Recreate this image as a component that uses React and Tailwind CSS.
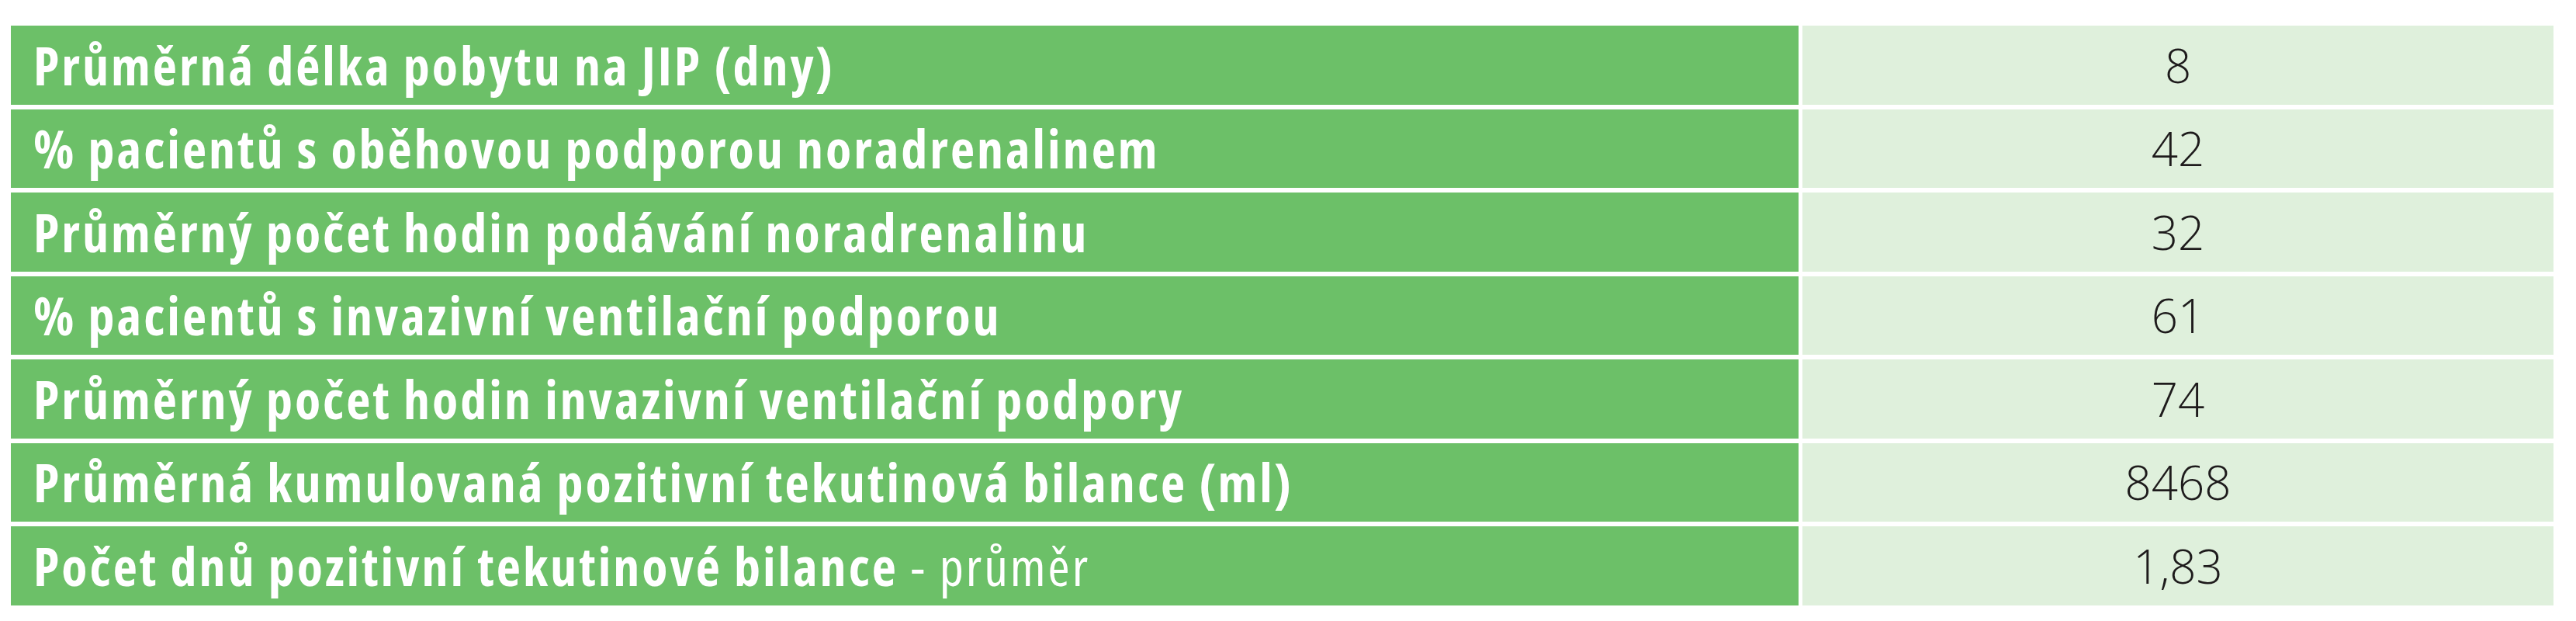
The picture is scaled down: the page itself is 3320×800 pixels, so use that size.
const rows = [
  { label: 'Průměrná délka pobytu na JIP (dny)', value: '8' },
  { label: '% pacientů s oběhovou podporou noradrenalinem', value: '42' },
  { label: 'Průměrný počet hodin podávání noradrenalinu', value: '32' },
  { label: '% pacientů s invazivní ventilační podporou', value: '61' },
  { label: 'Průměrný počet hodin invazivní ventilační podpory', value: '74' },
  { label: 'Průměrná kumulovaná pozitivní tekutinová bilance (ml)', value: '8468' },
  { label: 'Počet dnů pozitivní tekutinové bilance', extra: ' - průměr', value: '1,83' },
];

export default function App() {
  return (
    <div className="w-[3320px] h-[800px] bg-white pl-[14px] pt-[33px] font-['Open_Sans',sans-serif]">
      <div className="grid grid-cols-[2304px_968px] gap-x-[5px] gap-y-[6px]">
        {rows.map((r) => (
          <div key={r.label} className="contents">
            <div className="h-[101.5px] bg-[#6cc068] flex items-center pl-[29px] text-white text-[68px] font-bold font-stretch-condensed tracking-[3px] leading-none whitespace-nowrap">
              {r.label}
              {r.extra && <span className="font-normal whitespace-pre">{r.extra}</span>}
            </div>
            <div className="h-[101.5px] bg-[#dff0dc] flex items-center justify-center text-[#1e1b1c] text-[60px] font-light leading-none">
              {r.value}
            </div>
          </div>
        ))}
      </div>
    </div>
  );
}
